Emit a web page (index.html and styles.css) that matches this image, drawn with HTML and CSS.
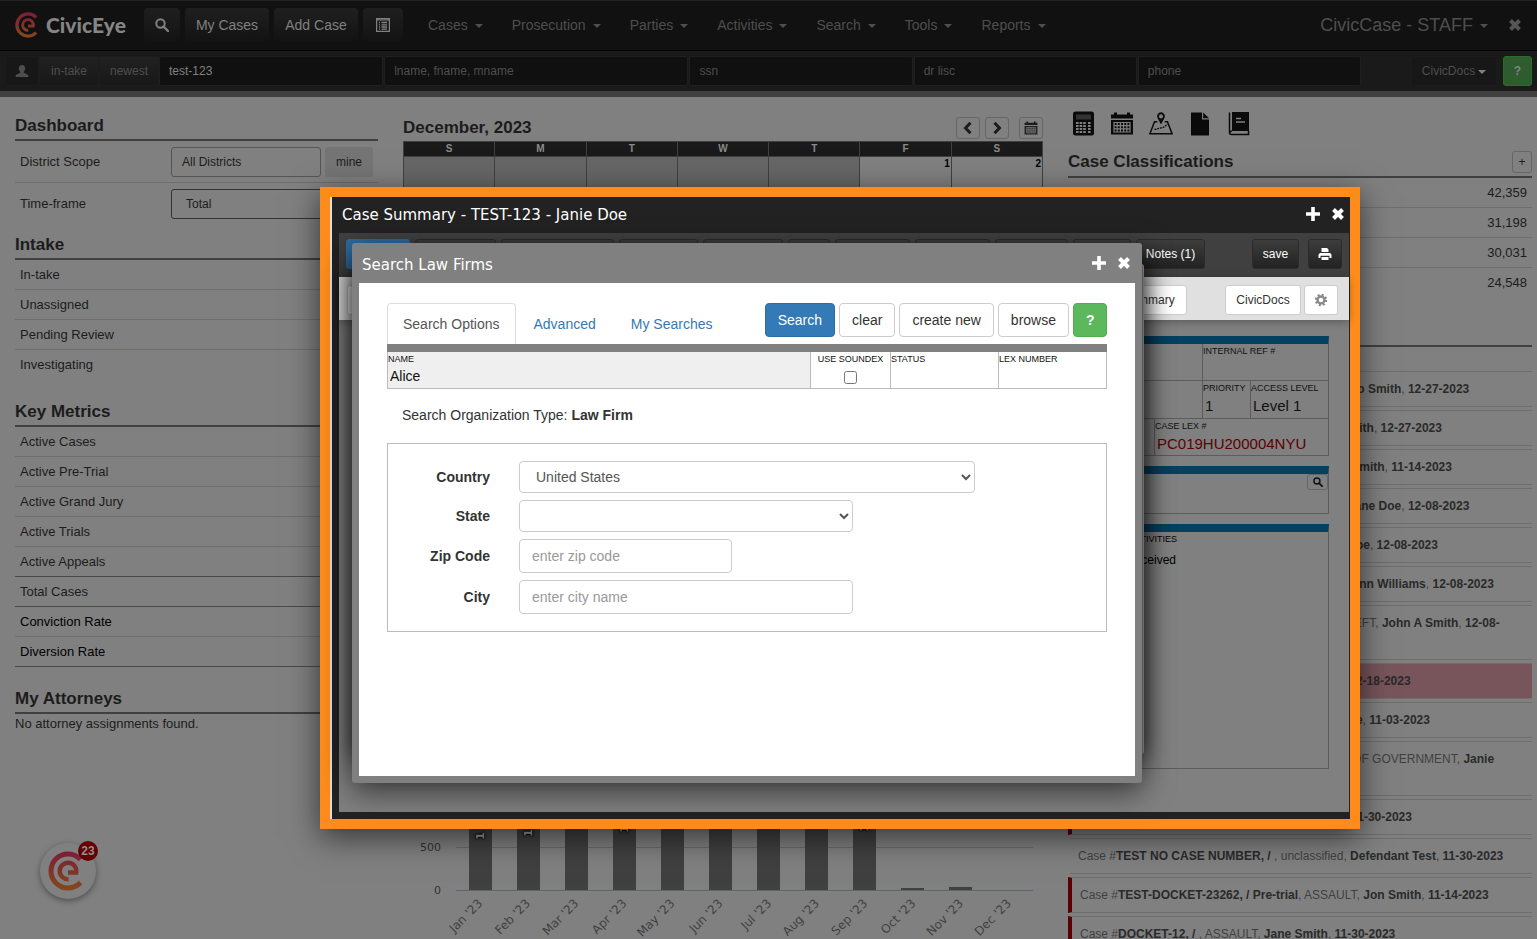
FILE: index.html
```html
<!DOCTYPE html>
<html lang="en">

<head>
    <meta charset="UTF-8">
    <meta name="viewport" content="width=device-width, initial-scale=1.0">
    <title>CivicCase - Search Law Firms</title>
    <link rel="stylesheet" href="styles.css">
</head>

<body>
    <!-- Shared icons -->
    <svg class="sprite" width="0" height="0" aria-hidden="true">
        <linearGradient id="brand" x1="0" y1="0" x2="0" y2="40" gradientUnits="userSpaceOnUse">
            <stop offset="0" stop-color="#7d1c38"/>
            <stop offset="1" stop-color="#83491a"/>
        </linearGradient>
        <symbol id="i-logo" viewBox="0 0 40 40">
            <g fill="none" stroke="url(#brand)">
                <path d="M32.5 8.5A17 17 0 1 0 32.5 31.5" stroke-width="5"/>
                <path d="M20 21.5H28.2A8.3 8.3 0 1 0 20.5 28.3" stroke-width="4.4"/>
            </g>
        </symbol>
        <symbol id="i-search" viewBox="0 0 14 14">
            <circle cx="5.5" cy="5.5" r="4.2" fill="none" stroke="currentColor" stroke-width="2"/>
            <path d="M8.5 8.5L13 13" stroke="currentColor" stroke-width="2.4" stroke-linecap="round"/>
        </symbol>
        <symbol id="i-list" viewBox="0 0 14 14">
            <path d="M.6.6h12.8v12.8H.6zM.6 2h12.8" fill="none" stroke="currentColor" stroke-width="1.2"/>
            <path d="M3 4.5h1M5.5 4.5H11M3 6.8h1M5.5 6.8H11M3 9h1M5.5 9H11M3 11.2h1M5.5 11.2H11" stroke="currentColor" stroke-width="1.3"/>
        </symbol>
        <symbol id="i-user" viewBox="0 0 14 14">
            <path d="M7 1c2 0 3.2 1.3 3.2 3.3 0 1.3-.7 2.7-1.5 3.4v1l3.6 1.7c.7.3 1 .8 1 1.6v1H.7v-1c0-.8.3-1.3 1-1.6l3.6-1.7v-1C4.500 7 3.800 5.600 3.800 4.300 3.800 2.300 5 1 7 1z" fill="currentColor"/>
        </symbol>
        <symbol id="i-close" viewBox="0 0 14 14">
            <path d="M2.5 2.5l9 9M11.5 2.5l-9 9" stroke="currentColor" stroke-width="4"/>
        </symbol>
        <symbol id="i-plus" viewBox="0 0 14 14">
            <path d="M7 0v14M0 7h14" stroke="currentColor" stroke-width="3.6"/>
        </symbol>
        <symbol id="i-prev" viewBox="0 0 14 14">
            <path d="M9.5 1.7L4.5 7l5 5.3" fill="none" stroke="currentColor" stroke-width="3"/>
        </symbol>
        <symbol id="i-next" viewBox="0 0 14 14">
            <path d="M4.5 1.7L9.5 7l-5 5.3" fill="none" stroke="currentColor" stroke-width="3"/>
        </symbol>
        <symbol id="i-calendar" viewBox="0 0 24 24">
            <path d="M1 3h3V1h3v2h10V1h3v2h3v4H1zM1 8.5h22V23H1z" fill="currentColor"/>
            <path d="M4 11h16v9.5H4zM4 14.2h16M4 17.3h16M7.2 11v9.5M10.4 11v9.5M13.6 11v9.5M16.8 11v9.5" fill="none" stroke="#808080" stroke-width="1.2"/>
        </symbol>
        <symbol id="i-calculator" viewBox="0 0 24 24">
            <rect x="2" y="0" width="21" height="24" rx="2.5" fill="currentColor"/>
            <path d="M5 3h15v5H5z" fill="#333"/>
            <path d="M5 11.5h10.5M17 11.5h3M5 14.5h10.5M17 14.5h3M5 17.5h10.5M17 17.5h3M5 20.5h10.5M17 20.5h3" stroke="#808080" stroke-width="2" stroke-dasharray="2.6 1"/>
        </symbol>
        <symbol id="i-map" viewBox="0 0 26 24">
            <path d="M9 10H6L1 23h24l-5-13h-3" fill="none" stroke="currentColor" stroke-width="1.6"/>
            <path d="M6 18.5l6-1.5 4-1 4-3" fill="none" stroke="currentColor" stroke-width="1.5" stroke-dasharray="2 1"/>
            <path d="M13 13L9.3 6a4.2 4.2 0 1 1 7.4 0z" fill="currentColor"/>
            <circle cx="13" cy="4.3" r="2.2" fill="#808080"/>
        </symbol>
        <symbol id="i-file" viewBox="0 0 24 24">
            <path d="M3 1h11v7h7v16H3z" fill="currentColor"/>
            <path d="M15.2 1L21 6.8h-5.8z" fill="currentColor"/>
        </symbol>
        <symbol id="i-book" viewBox="0 0 24 24">
            <path d="M5 .5h17v19H5z" fill="currentColor"/>
            <path d="M21.5 19.5v3.5H4.5A2 2 0 0 1 2.5 21V1M2.5 21.5q.5-2 2.5-2" fill="none" stroke="currentColor" stroke-width="1.5"/>
            <path d="M9 7h5M9 10.5h9" stroke="#808080" stroke-width="1.4"/>
        </symbol>
        <symbol id="i-print" viewBox="0 0 14 14">
            <path d="M4 1h5l1.5 1.5V5h-7V1zM2 6h10l1.5 1.5V11H11.5V8.8h-9V11H.5V7.5zM3.5 10h7v3h-7z" fill="currentColor"/>
        </symbol>
        <symbol id="i-gear" viewBox="0 0 14 14">
            <circle cx="7" cy="7" r="3.5" fill="none" stroke="currentColor" stroke-width="2.4"/>
            <circle cx="7" cy="7" r="5.2" fill="none" stroke="currentColor" stroke-width="2" stroke-dasharray="2 2.084"/>
        </symbol>
    </svg>

    <!-- Main navigation -->
    <header class="navbar">
        <a href="#" class="brand"><svg class="brand-mark"><use href="#i-logo"/></svg>CivicEye</a>
        <button class="nav-btn" aria-label="Search"><svg class="icon"><use href="#i-search"/></svg></button>
        <button class="nav-btn nav-wide">My Cases</button>
        <button class="nav-btn nav-wide">Add Case</button>
        <button class="nav-btn nav-list" aria-label="List"><svg class="icon"><use href="#i-list"/></svg></button>
        <nav class="menu">
            <a href="#">Cases</a>
            <a href="#">Prosecution</a>
            <a href="#">Parties</a>
            <a href="#">Activities</a>
            <a href="#">Search</a>
            <a href="#">Tools</a>
            <a href="#">Reports</a>
        </nav>
        <a href="#" class="account">CivicCase - STAFF</a>
        <button class="nav-close" aria-label="Close"><svg class="icon"><use href="#i-close"/></svg></button>
    </header>

    <!-- Quick search -->
    <form class="quickbar">
        <button type="button" class="quick-btn quick-user" aria-label="Person"><svg class="icon"><use href="#i-user"/></svg></button>
        <button type="button" class="quick-btn">in-take</button>
        <button type="button" class="quick-btn">newest</button>
        <div class="quick-fields">
            <input type="text" value="test-123" aria-label="Case number">
            <input type="text" placeholder="lname, fname, mname" aria-label="Name">
            <input type="text" placeholder="ssn" aria-label="SSN">
            <input type="text" placeholder="dr lisc" aria-label="Driver license">
            <input type="text" placeholder="phone" aria-label="Phone">
        </div>
        <button type="button" class="quick-docs">CivicDocs</button>
        <button type="button" class="quick-help">?</button>
    </form>

    <main class="dashboard">
        <section class="left">
            <h2>Dashboard</h2>
            <div class="filter">
                <span class="filter-label">District Scope</span>
                <button class="scope">All Districts</button>
                <button class="mine">mine</button>
            </div>
            <div class="filter">
                <label class="filter-label" for="timeframe">Time-frame</label>
                <select id="timeframe"><option>Total</option></select>
            </div>
            <h2>Intake</h2>
            <ul class="metrics">
                <li>In-take</li>
                <li>Unassigned</li>
                <li>Pending Review</li>
                <li>Investigating</li>
            </ul>
            <h2>Key Metrics</h2>
            <ul class="metrics">
                <li>Active Cases</li>
                <li>Active Pre-Trial</li>
                <li>Active Grand Jury</li>
                <li>Active Trials</li>
                <li class="rule">Active Appeals</li>
                <li class="rule">Total Cases</li>
                <li class="dark">Conviction Rate</li>
                <li class="dark rule">Diversion Rate</li>
            </ul>
            <h2>My Attorneys</h2>
            <p>No attorney assignments found.</p>
        </section>

        <section class="middle">
            <div class="month">
                <h2>December, 2023</h2>
                <button aria-label="Previous month"><svg class="icon"><use href="#i-prev"/></svg></button>
                <button aria-label="Next month"><svg class="icon"><use href="#i-next"/></svg></button>
                <button class="month-pick" aria-label="Pick date"><svg class="icon"><use href="#i-calendar"/></svg></button>
            </div>
            <table class="calendar">
                <thead>
                    <tr><th>S</th><th>M</th><th>T</th><th>W</th><th>T</th><th>F</th><th>S</th></tr>
                </thead>
                <tbody>
                    <tr>
                        <td class="off"></td><td class="off"></td><td class="off"></td><td class="off"></td><td class="off"></td>
                        <td>1</td><td>2</td>
                    </tr>
                </tbody>
            </table>
            <div class="chart">
                <div class="axis"><span>500</span><span>0</span></div>
                <div class="plot">
                    <div class="col"><div class="bar" style="height:120px"><b style="bottom:48px">1</b></div><span>Jan '23</span></div>
                    <div class="col"><div class="bar" style="height:120px"><b style="bottom:51px">1</b></div><span>Feb '23</span></div>
                    <div class="col"><div class="bar" style="height:120px"></div><span>Mar '23</span></div>
                    <div class="col"><div class="bar" style="height:120px"><b style="bottom:55px">1</b></div><span>Apr '23</span></div>
                    <div class="col"><div class="bar" style="height:120px"></div><span>May '23</span></div>
                    <div class="col"><div class="bar" style="height:120px"></div><span>Jun '23</span></div>
                    <div class="col"><div class="bar" style="height:120px"></div><span>Jul '23</span></div>
                    <div class="col"><div class="bar" style="height:120px"></div><span>Aug '23</span></div>
                    <div class="col"><div class="bar" style="height:120px"><b style="bottom:56px">1</b></div><span>Sep '23</span></div>
                    <div class="col"><div class="bar" style="height:2px"></div><span>Oct '23</span></div>
                    <div class="col"><div class="bar" style="height:3px"></div><span>Nov '23</span></div>
                    <div class="col"><div class="bar" style="height:0"></div><span>Dec '23</span></div>
                </div>
            </div>
        </section>

        <section class="right">
            <div class="shortcuts">
                <svg><use href="#i-calculator"/></svg>
                <svg><use href="#i-calendar"/></svg>
                <svg><use href="#i-map"/></svg>
                <svg><use href="#i-file"/></svg>
                <svg><use href="#i-book"/></svg>
            </div>
            <div class="class-head">
                <h2>Case Classifications</h2>
                <button>+</button>
            </div>
            <ul class="counts">
                <li>42,359</li>
                <li>31,198</li>
                <li>30,031</li>
                <li>24,548</li>
            </ul>
            <div class="recent">
                <p>Case #<b>TEST-DOCKET-106218, / Filed</b>, ASSAULT, <b>Jo Smith</b>, <b>12-27-2023</b></p>
                <p>Case #<b>TEST-DOCKET-10457, / Trial</b>, ASSAULT, <b>Smith</b>, <b>12-27-2023</b></p>
                <p>Case #<b>TEST-DOCKET-18-2204, / Trial</b>, ASSAULT, <b>Smith</b>, <b>11-14-2023</b></p>
                <p>Case #<b>TEST-DOCKET-123, / Pre-trial</b>, ASSAULT, <b>Jane Doe</b>, <b>12-08-2023</b></p>
                <p>Case #<b>TEST-DOCKET-221043, / Trial</b>, ASSAULT, <b>Doe</b>, <b>12-08-2023</b></p>
                <p>Case #<b>TEST-DOCKET-104-22, / Pre-trial</b>, THEFT, <b>Ann Williams</b>, <b>12-08-2023</b></p>
                <p>Case #<b>PROS-TEST-DOCKET-232-1, / Pre-trial</b>, THEFT, <b>John A Smith</b>, <b>12-08-2023</b></p>
                <p class="late">Case #<b>TEST-DOCKET-2418, / </b>, ASSAULT, <b>Smith</b>, <b>12-18-2023</b></p>
                <p>Case #<b>TEST-DOCKET-1042-2301, / </b>, ASSAULT, <b>Doe</b>, <b>11-03-2023</b></p>
                <p>Case #<b>TEST-DOCKET-120-23, / </b>, OBSTRUCTION OF GOVERNMENT, <b>Janie Williams</b>, <b>12-01-2023</b></p>
                <p class="flag">Case #<b>DOCKET-118-2, / </b>, ASSAULT, <b>Jane Smith</b>, <b>11-30-2023</b></p>
                <p>Case #<b>TEST NO CASE NUMBER, / </b>, unclassified, <b>Defendant Test</b>, <b>11-30-2023</b></p>
                <p class="flag">Case #<b>TEST-DOCKET-23262, / Pre-trial</b>, ASSAULT, <b>Jon Smith</b>, <b>11-14-2023</b></p>
                <p class="flag">Case #<b>DOCKET-12, / </b>, ASSAULT, <b>Jane Smith</b>, <b>11-30-2023</b></p>
            </div>
        </section>
    </main>

    <button class="chat" aria-label="Messages"><svg><use href="#i-logo"/></svg><span class="badge">23</span></button>

    <!-- Case summary window -->
    <div class="case-frame">
        <div class="case-dialog">
            <div class="dialog-head">
                <h3>Case Summary - TEST-123 - Janie Doe</h3>
                <button aria-label="Maximize"><svg class="icon"><use href="#i-plus"/></svg></button>
                <button aria-label="Close"><svg class="icon"><use href="#i-close"/></svg></button>
            </div>
            <div class="case-tabs">
                <div class="tab-list">
                    <button class="active" aria-label="Summary"></button>
                    <button aria-label="Charges"></button>
                    <button aria-label="Participants"></button>
                    <button aria-label="Evidence"></button>
                    <button aria-label="Documents"></button>
                    <button aria-label="Bail"></button>
                    <button aria-label="Activities"></button>
                    <button aria-label="Calendar"></button>
                    <button aria-label="History"></button>
                    <button aria-label="Tasks"></button>
                    <button>Notes (1)</button>
                </div>
                <button class="save">save</button>
                <button class="print" aria-label="Print"><svg class="icon"><use href="#i-print"/></svg></button>
            </div>
            <div class="case-tools">
                <button class="first-tool" aria-label="Edit"></button>
                <button>Summary</button>
                <button class="docs">CivicDocs</button>
                <button class="gear" aria-label="Settings"><svg class="icon"><use href="#i-gear"/></svg></button>
            </div>
            <div class="case-body">
                <div class="block">
                    <div class="cells ref-row">
                        <div></div>
                        <div><small>INTERNAL REF #</small></div>
                    </div>
                    <div class="cells level-row">
                        <div></div>
                        <div><small>PRIORITY</small>1</div>
                        <div><small>ACCESS LEVEL</small>Level 1</div>
                    </div>
                    <div class="cells lex-row">
                        <div></div>
                        <div class="lex"><small>CASE LEX #</small>PC019HU200004NYU</div>
                    </div>
                </div>
                <div class="block find-block">
                    <button aria-label="Find"><svg><use href="#i-search"/></svg></button>
                </div>
                <div class="block activity-block">
                    <div class="activity"><small>ACTIVITIES</small>Received</div>
                </div>
            </div>
        </div>
    </div>

    <!-- Law firm search window -->
    <div class="under-dialog"></div>
    <div class="firm-dialog">
        <div class="dialog-head">
            <h3>Search Law Firms</h3>
            <button aria-label="Maximize"><svg class="icon"><use href="#i-plus"/></svg></button>
            <button aria-label="Close"><svg class="icon"><use href="#i-close"/></svg></button>
        </div>
        <form class="firm-body">
            <div class="firm-tabs">
                <a href="#" class="active">Search Options</a>
                <a href="#">Advanced</a>
                <a href="#">My Searches</a>
                <div class="actions">
                    <button type="button" class="primary">Search</button>
                    <button type="button">clear</button>
                    <button type="button">create new</button>
                    <button type="button">browse</button>
                    <button type="button" class="help">?</button>
                </div>
            </div>
            <div class="criteria">
                <div class="name"><label for="name">NAME</label><input type="text" id="name" value="Alice"></div>
                <div class="soundex"><label for="soundex">USE SOUNDEX</label><input type="checkbox" id="soundex"></div>
                <div><label for="status">STATUS</label><input type="text" id="status"></div>
                <div><label for="lex">LEX NUMBER</label><input type="text" id="lex"></div>
            </div>
            <p class="org-type">Search Organization Type: <b>Law Firm</b></p>
            <div class="address">
                <label for="country">Country</label>
                <select id="country" class="w-long"><option>United States</option></select>
                <label for="state">State</label>
                <select id="state" class="w-mid"><option></option></select>
                <label for="zip">Zip Code</label>
                <input type="text" id="zip" class="w-short" placeholder="enter zip code">
                <label for="city">City</label>
                <input type="text" id="city" class="w-mid" placeholder="enter city name">
            </div>
        </form>
    </div>
</body>

</html>
```

FILE: styles.css
```css
* {
    box-sizing: border-box;
}

body {
    margin: 0;
    height: 100vh;
    overflow: hidden;
    position: relative;
    background-color: #808080;
    color: #1c1c1c;
    font-family: "Liberation Sans", Arial, sans-serif;
    font-size: 13px;
    line-height: 18px;
}

button,
input,
select {
    font-family: inherit;
    font-size: 12px;
    margin: 0;
    padding: 0;
    color: inherit;
}

a {
    text-decoration: none;
    color: inherit;
}

ul {
    list-style: none;
    margin: 0;
    padding: 0;
}

h2 {
    margin: 0;
    font-size: 17px;
    line-height: 24px;
}

.sprite {
    position: absolute;
}

.icon {
    width: 14px;
    height: 14px;
    display: block;
    margin: auto;
}

/* Main navigation */
.navbar {
    display: flex;
    align-items: center;
    height: 51px;
    padding: 0 15px 2px;
    background-color: #111;
    border-top: 1px solid #222;
    border-bottom: 1px solid #000;
}

.brand {
    display: flex;
    align-items: center;
    gap: 5px;
    width: 129px;
    font-family: Lato, sans-serif;
    font-size: 21px;
    font-weight: 900;
    color: #858585;
}

.brand-mark {
    width: 26px;
    height: 26px;
}

.nav-btn {
    height: 33px;
    width: 36px;
    margin-right: 5px;
    border: none;
    border-radius: 4px;
    background: linear-gradient(#1f1f1f, #131313);
    color: #808080;
    font-size: 14px;
}

.nav-wide {
    width: 84px;
}

.nav-list {
    width: 40px;
    margin: 0;
}

.menu {
    display: flex;
    gap: 29px;
    padding-left: 25px;
    font-size: 14px;
    color: #4e4e4e;
}

.menu a::after,
.account::after,
.quick-docs::after {
    content: "";
    display: inline-block;
    margin-left: 7px;
    vertical-align: middle;
    border-top: 4px solid;
    border-left: 4px solid transparent;
    border-right: 4px solid transparent;
}

.account {
    margin-left: auto;
    font-size: 18px;
    color: #4e4e4e;
}

.nav-close {
    margin-left: 20px;
    border: none;
    background: none;
    color: #555;
}

/* Quick search bar */
.quickbar {
    display: flex;
    align-items: center;
    height: 46px;
    padding: 0 5px;
    background-color: #1a1a1a;
    border-bottom: 6px solid #404040;
}

.quick-btn {
    width: 60px;
    height: 30px;
    border: 1px solid #1c1c1c;
    background: linear-gradient(#212121, #181818);
    color: #4e4e4e;
}

.quick-user {
    width: 34px;
    background: #171717;
    border-radius: 4px;
}

.quick-fields {
    flex: 1;
    display: grid;
    grid-template-columns: 224fr 304fr 223fr 223fr 223fr;
    gap: 1px;
}

.quick-fields input {
    width: 100%;
    height: 30px;
    padding: 0 9px;
    border: 1px solid #1f1f1f;
    border-radius: 2px;
    background-color: #101010;
    color: #808080;
}

.quick-fields input::placeholder {
    color: #4e4e4e;
}

.quick-docs {
    width: 86px;
    height: 30px;
    margin: 0 6px 0 50px;
    border: 1px solid #1b1b1b;
    border-radius: 3px;
    background-color: #171717;
    color: #4e4e4e;
}

.quick-docs::after {
    margin-left: 3px;
    color: #808080;
}

.quick-help {
    width: 29px;
    height: 30px;
    border: 1px solid #266f26;
    border-radius: 3px;
    background-color: #2e5c2e;
    color: #808080;
    font-weight: bold;
}

/* Dashboard columns */
.dashboard {
    display: grid;
    grid-template-columns: 363fr 640fr 464fr;
    gap: 25px;
    padding: 0 5px 0 15px;
}

.left {
    padding-top: 17px;
}

.left h2 {
    height: 27px;
    border-bottom: 2px solid #404040;
}

.filter {
    display: flex;
    align-items: center;
    height: 42px;
    padding-left: 5px;
    border-bottom: 1px solid #6e6e6e;
}

.filter + .filter {
    border: none;
    margin-bottom: 8px;
}

.filter-label {
    width: 151px;
}

.scope,
.filter select {
    width: 150px;
    height: 30px;
    padding-left: 10px;
    border: 1px solid #555;
    border-radius: 3px;
    background: none;
    text-align: left;
}

.filter select {
    appearance: none;
    width: 202px;
    padding-left: 14px;
    border-color: #333;
}

.mine {
    width: 48px;
    height: 30px;
    margin-left: 4px;
    border: none;
    border-radius: 3px;
    background-color: #757575;
}

.metrics {
    margin-bottom: 20px;
}

.metrics li {
    height: 30px;
    padding: 6px 5px 5px;
    border-bottom: 1px solid #6e6e6e;
}

.metrics:nth-of-type(1) li:last-child {
    border: none;
}

.metrics .rule {
    border-color: #4a4a4a;
}

.metrics .dark {
    color: #000;
}

.left p {
    margin: 0;
    padding-top: 1px;
}

.month {
    display: flex;
    align-items: center;
    height: 44px;
    padding-top: 17px;
}

.month h2 {
    flex: 1;
}

.month button,
.class-head button {
    width: 24px;
    height: 22px;
    margin-left: 5px;
    border: 1px solid #666;
    border-radius: 3px;
    background: none;
}

.month .month-pick {
    margin-left: 10px;
}

.calendar {
    width: 100%;
    height: 120px;
    table-layout: fixed;
    border-collapse: collapse;
    font-size: 10px;
    line-height: 12px;
}

.calendar th {
    height: 15px;
    padding: 0;
    border: 1px solid #404040;
    background-color: #1a1a1a;
    color: #8a8a8a;
}

.calendar td {
    padding: 1px;
    border: 1px solid #404040;
    text-align: right;
    vertical-align: top;
    font-weight: bold;
    color: #000;
}

.calendar .off {
    background-color: #666;
}

/* Monthly chart */
.chart {
    display: flex;
    margin-top: 510px;
    padding-right: 10px;
    height: 120px;
    font-family: "DejaVu Sans", sans-serif;
    font-size: 11px;
    color: #333;
}

.axis {
    display: flex;
    flex-direction: column;
    justify-content: flex-end;
    gap: 25px;
    width: 38px;
    margin: 0 15px -9px 0;
    text-align: right;
}

.plot {
    flex: 1;
    display: flex;
    border-bottom: 1px solid #5f6670;
    background: linear-gradient(#6b6b6b, #6b6b6b) 0 76px / 100% 1px no-repeat;
}

.col {
    flex: 1;
    display: flex;
    align-items: flex-end;
    justify-content: center;
    position: relative;
}

.bar {
    position: relative;
    width: 23px;
    background-color: #404040;
}

.bar b {
    position: absolute;
    left: 8px;
    transform: rotate(-90deg);
    line-height: 12px;
    color: #a0a0a0;
    text-shadow: 0 0 2px #000, 0 0 2px #000, 0 0 3px #000;
}

.col span {
    position: absolute;
    top: 100%;
    right: 50%;
    margin: 5px 6px 0 0;
    transform: rotate(-45deg);
    transform-origin: right top;
    white-space: nowrap;
    font-size: 12px;
    color: #404040;
}

/* Classification column */
.shortcuts {
    display: flex;
    gap: 15px;
    padding: 14px 0 0 3px;
    color: #0a0a0a;
}

.shortcuts svg {
    width: 24px;
    height: 25px;
}

.class-head {
    display: flex;
    align-items: center;
    margin-top: 11px;
    height: 31px;
    border-bottom: 2px solid #404040;
}

.class-head h2 {
    flex: 1;
}

.class-head button {
    width: 20px;
}

.counts {
    margin-bottom: 47px;
}

.counts li {
    height: 30px;
    padding: 6px 5px;
    border-bottom: 1px solid #6e6e6e;
    text-align: right;
}

.counts li:last-child {
    border: none;
}

.recent {
    padding-top: 24px;
    border-top: 2px solid #404040;
    font-size: 12px;
    color: #404040;
}

.recent p {
    min-height: 36px;
    margin: 0 0 3px 2px;
    padding: 8px 8px 7px;
    border-top: 1px solid #6e6e6e;
    border-bottom: 1px solid #6e6e6e;
    line-height: 19px;
}

.recent b {
    color: #2a2a2a;
}

.recent .flag {
    margin-left: 0;
    border-left: 4px solid #5a0000;
}

.recent .late {
    background-color: #78555b;
}

/* Chat button */
.chat {
    position: absolute;
    left: 40px;
    bottom: 40px;
    width: 56px;
    height: 56px;
    border: none;
    border-radius: 50%;
    background-color: #808080;
    box-shadow: 0 2px 6px rgba(0, 0, 0, 0.4);
}

.chat svg {
    width: 40px;
    height: 40px;
    display: block;
    margin: auto;
}

.badge {
    position: absolute;
    top: -2px;
    right: -2px;
    width: 20px;
    border-radius: 10px;
    background-color: #660000;
    color: #8f8f8f;
    line-height: 20px;
    font-weight: bold;
}

/* Case summary window */
.case-frame {
    position: absolute;
    top: 187px;
    left: 320px;
    right: 177px;
    border: 10px solid #ff8c1a;
    background-color: #e0e0e0;
    box-shadow: 0 8px 30px rgba(0, 0, 0, 0.6);
}

.case-dialog {
    margin-left: 2px;
    padding: 0 1px 7px 7px;
    background-color: #222;
    color: #111;
}

.dialog-head {
    display: flex;
    align-items: center;
    gap: 11px;
    height: 36px;
    padding: 0 4px 0 3px;
    color: #fff;
}

.dialog-head h3 {
    flex: 1;
    margin: 0;
    font-family: "DejaVu Sans", Verdana, sans-serif;
    font-size: 15px;
    font-weight: normal;
}

.dialog-head button {
    padding-bottom: 3px;
    border: none;
    background: none;
}

.case-tabs,
.case-tools {
    display: flex;
    align-items: center;
    height: 44px;
    padding: 0 7px 2px;
    background-color: #404040;
}

.tab-list {
    flex: 1;
    display: grid;
    grid-template-columns: 64px 81px 113px 79px 80px 42px 75px 75px 73px 58px 69px;
    gap: 5px;
}

.case-tabs button {
    height: 30px;
    border: 1px solid #2b2b2b;
    border-radius: 3px;
    background: linear-gradient(#3d3d3d, #222);
    color: #fff;
}

.case-tabs .active {
    background: #2d6ca2;
    border-color: #2d6ca2;
}

.case-tabs .save {
    width: 47px;
    margin-right: 9px;
}

.case-tabs .print {
    width: 34px;
}

.case-tools {
    height: 43px;
    padding: 2px 11px 0 8px;
    background-color: #e0e0e0;
    box-shadow: 0 2px 8px rgba(0, 0, 0, 0.3);
    position: relative;
}

.case-tools button {
    width: 76px;
    height: 30px;
    border: 1px solid #ccc;
    border-radius: 3px;
    background-color: #fff;
    color: #333;
}

.case-tools .first-tool {
    margin-right: auto;
}

.case-tools .docs {
    margin: 0 3px 0 38px;
}

.case-tools .gear {
    width: 34px;
    color: #888;
}

.case-body {
    height: 492px;
    padding: 16px 20px 0;
    background-color: #808080;
}

.block {
    margin-bottom: 10px;
    border: 1px solid #5c5c5c;
    border-width: 8px 1px 0 0;
    border-top-color: #04405f;
}

.cells {
    display: grid;
    height: 37px;
    font-size: 15px;
    line-height: 21px;
}

.cells div {
    padding-left: 2px;
    border-left: 1px solid #5c5c5c;
    border-bottom: 1px solid #5c5c5c;
}

.block small {
    display: block;
    margin-left: -2px;
    font-size: 9px;
    line-height: 14px;
}

.ref-row {
    grid-template-columns: 1fr 126px;
}

.level-row {
    grid-template-columns: 1fr 48px 78px;
    height: 38px;
}

.lex-row {
    grid-template-columns: 1fr 174px;
}

.cells .lex {
    color: #5c0000;
}

.cells .lex small {
    color: #111;
}

.find-block {
    height: 48px;
    border-bottom-width: 1px;
    text-align: right;
}

.find-block button {
    width: 21px;
    height: 16px;
    border: 1px solid #666;
    border-radius: 3px;
    background: none;
    vertical-align: top;
}

.find-block svg {
    display: block;
    width: 10px;
    height: 10px;
    margin: auto;
}

.activity-block {
    height: 245px;
    border-bottom-width: 1px;
}

.activity {
    width: 202px;
    margin-left: auto;
    font-size: 12px;
    line-height: 28px;
    color: #000;
}

.activity small {
    margin-left: 2px;
}

/* Law firm search window */
.under-dialog {
    position: absolute;
    top: 264px;
    left: 353px;
    right: 393px;
    height: 490px;
    border-radius: 3px;
    border-right: 1px solid #999;
    background-color: #777;
    box-shadow: 0 4px 24px rgba(0, 0, 0, 0.8);
}

.firm-dialog {
    position: absolute;
    top: 243px;
    left: 352px;
    right: 395px;
    padding: 0 7px 7px;
    border-radius: 3px;
    background-color: #808080;
    box-shadow: 0 8px 30px rgba(0, 0, 0, 0.6);
}

.firm-dialog .dialog-head {
    height: 40px;
    padding-top: 3px;
}

.firm-body {
    min-height: 493px;
    padding: 20px 28px;
    background-color: #fff;
    color: #333;
    font-size: 14px;
}

.firm-tabs {
    display: flex;
    height: 49px;
    border-bottom: 8px solid #808080;
}

.firm-tabs a {
    padding: 12px 17px 0 18px;
    color: #337ab7;
}

.firm-tabs .active {
    padding: 11px 15px 0;
    border: 1px solid #ddd;
    border-bottom: none;
    border-radius: 4px 4px 0 0;
    color: #555;
}

.actions {
    display: flex;
    gap: 4px;
    margin-left: auto;
}

.actions button {
    height: 34px;
    padding: 0 12px;
    border: 1px solid #ccc;
    border-radius: 4px;
    background-color: #fff;
    font-size: 14px;
}

.actions .primary {
    background-color: #337ab7;
    border-color: #2e6da4;
    color: #fff;
}

.actions .help {
    width: 34px;
    background-color: #5cb85c;
    border-color: #4cae4c;
    color: #fff;
    font-weight: bold;
}

.criteria {
    display: grid;
    grid-template-columns: 1fr 80px 108px 108px;
    height: 37px;
    border: 1px solid #bbb;
    border-top: none;
    font-size: 9px;
    line-height: 14px;
    color: #111;
}

.criteria div + div {
    border-left: 1px solid #bbb;
}

.criteria label {
    display: block;
}

.criteria input[type="text"] {
    display: block;
    width: 100%;
    height: 20px;
    padding: 0 2px;
    border: none;
    background: none;
    font-size: 14px;
}

.criteria .name {
    background-color: #efefef;
}

.soundex {
    text-align: center;
}

.soundex input {
    margin-top: 5px;
}

.org-type {
    margin: 17px 15px 19px;
}

.address {
    display: grid;
    grid-template-columns: 102px 1fr;
    align-items: center;
    gap: 7px 29px;
    padding: 17px 0;
    border: 1px solid #bbb;
}

.address label {
    text-align: right;
    font-weight: bold;
}

.address select,
.address input {
    height: 34px;
    padding: 0 12px;
    border: 1px solid #ccc;
    border-radius: 4px;
    background-color: #fff;
    font-size: 14px;
    color: #555;
}

.address select {
    height: 32px;
}

.address input::placeholder {
    color: #999;
}

.w-long {
    width: 456px;
}

.w-mid {
    width: 334px;
}

.w-short {
    width: 213px;
}
```
